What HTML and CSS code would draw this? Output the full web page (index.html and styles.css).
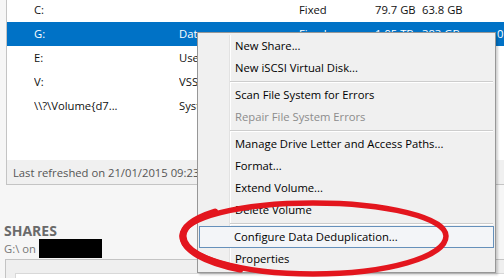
FILE: index.html
```html
<!DOCTYPE html>
<html>
<head>
<meta charset="utf-8">
<link rel="stylesheet" href="styles.css">
</head>
<body>
<div class="screen">
  <section class="volumes">
    <div class="list">
      <div class="row"><span>C:</span><span></span><span>Fixed</span><span>79.7 GB</span><span>63.8 GB</span><span></span></div>
      <div class="row selected"><span>G:</span><span>Data</span><span>Fixed</span><span>1.95 TB</span><span>383 GB</span><span>0</span></div>
      <div class="row"><span>E:</span><span>Users</span><span></span><span></span><span></span><span></span></div>
      <div class="row"><span>V:</span><span>VSS</span><span></span><span></span><span></span><span></span></div>
      <div class="row"><span>\\?\Volume{d7...</span><span>System</span><span></span><span></span><span></span><span></span></div>
    </div>
    <div class="status">Last refreshed on 21/01/2015 09:23</div>
  </section>

  <section class="shares">
    <h2 class="shares-title">SHARES</h2>
    <div class="shares-sub">G:\ on <span class="redact"></span></div>
    <div class="shares-panel"><div class="shares-inner"></div></div>
  </section>

  <div class="menu">
    <div class="item">New Share...</div>
    <div class="item">New iSCSI Virtual Disk...</div>
    <div class="sep"></div>
    <div class="item">Scan File System for Errors</div>
    <div class="item disabled">Repair File System Errors</div>
    <div class="sep"></div>
    <div class="item">Manage Drive Letter and Access Paths...</div>
    <div class="item">Format...</div>
    <div class="item">Extend Volume...</div>
    <div class="item">Delete Volume</div>
    <div class="sep"></div>
    <div class="item hl">Configure Data Deduplication...</div>
    <div class="item">Properties</div>
  </div>

  <svg class="circle" width="504" height="278" viewBox="0 0 504 278">
    <path d="M182 236 C182 217.8 240.6 203 313 203 C386.5 203 446 217.8 446 236 C446 257 386.5 274 313 274 C240.6 274 182 257 182 236 Z" fill="none" stroke="#e3161e" stroke-width="5.5"/>
    <path d="M240 269 C205 262 183 250 183 236 C183 226 196 218 215 212" fill="none" stroke="#e3161e" stroke-width="7" stroke-linecap="round"/>
  </svg>
</div>
</body>
</html>
```

FILE: styles.css
```css
html, body {
  margin: 0;
  padding: 0;
}
body {
  background: #f6f6f6;
  font-family: "Open Sans", "Noto Sans", sans-serif;
  font-size: 11.25px;
  color: #000;
  width: 504px;
  height: 278px;
  overflow: hidden;
}
.screen {
  position: relative;
  width: 504px;
  height: 278px;
  overflow: hidden;
}

/* Volumes panel */
.volumes {
  margin-top: -2px;
  margin-left: 6px;
  border-left: 1px solid #c4c4c4;
  border-bottom: 1px solid #c4c4c4;
  background: #fff;
}
.list {
  height: 162px;
}
.row {
  display: grid;
  grid-template-columns: 145px 120px 76px 47px 75px 1fr;
  padding-left: 27px;
  height: 24px;
  line-height: 24px;
  white-space: nowrap;
  overflow: hidden;
  color: #111;
}
.row span {
  overflow: hidden;
}
.row.selected {
  background: #0072c6;
  color: #fff;
}
.status {
  height: 24px;
  line-height: 25px;
  background: #f0f0f0;
  padding-left: 6px;
  color: #555;
  white-space: nowrap;
}

/* Shares section */
.shares-title {
  margin: 38px 0 0 0;
  padding-left: 4px;
  font-size: 14px;
  line-height: 16px;
  font-weight: 700;
  color: #6a6a6a;
}
.shares-sub {
  padding-left: 4px;
  height: 16px;
  line-height: 16px;
  color: #777;
  white-space: nowrap;
}
.redact {
  display: inline-block;
  width: 63px;
  height: 19px;
  background: #000;
  vertical-align: -5px;
}
.shares-panel {
  margin: 4px 0 0 5px;
  border-top: 1px solid #c4c4c4;
  border-left: 1px solid #c4c4c4;
  background: #efefef;
  padding: 13px 0 0 9px;
  height: 40px;
}
.shares-inner {
  height: 40px;
  background: #fff;
  border-top: 1px solid #d8d8d8;
  border-left: 1px solid #d8d8d8;
}

/* Context menu */
.menu {
  position: absolute;
  left: 197px;
  top: 32px;
  width: 299px;
  height: 241px;
  box-sizing: border-box;
  border: 1px solid #979797;
  background: #f0f0f0;
  padding: 2px;
  box-shadow: 2px 2px 2px rgba(0, 0, 0, 0.18);
}
.menu::before {
  content: "";
  position: absolute;
  left: 31px;
  top: 2px;
  bottom: 2px;
  width: 1px;
  background: #e2e2e2;
  border-right: 1px solid #fff;
}
.item {
  position: relative;
  height: 22px;
  line-height: 22px;
  padding-left: 35px;
  white-space: nowrap;
  color: #000;
}
.item.disabled {
  color: #8c8c8c;
}
.item.hl {
  border: 1px solid #6590bb;
  background: #f3f5f8;
  height: 20px;
  line-height: 20px;
  padding-left: 34px;
  margin: 0 -1px;
}
.sep {
  position: relative;
  height: 1px;
  margin: 2px 0 1px 30px;
  background: #cdcdcd;
  border-bottom: 1px solid #fff;
}

/* Red hand-drawn ellipse */
.circle {
  position: absolute;
  left: 0;
  top: 0;
  pointer-events: none;
}
```
